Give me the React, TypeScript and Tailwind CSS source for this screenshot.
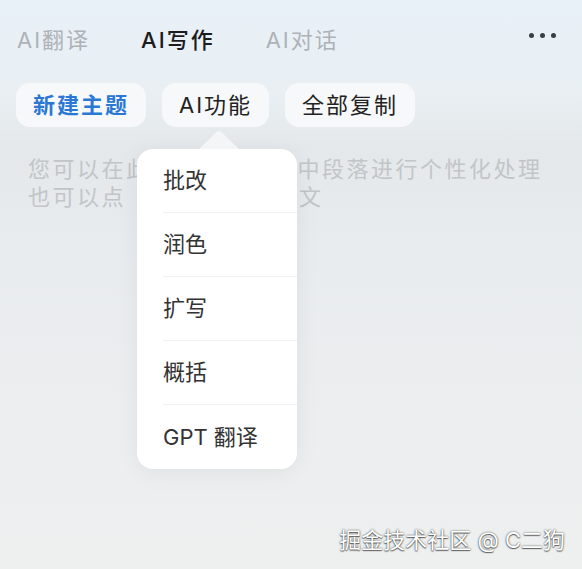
import { FC } from 'react'

const font = "font-['Inter','Noto_Sans_CJK_SC',sans-serif]"

const tabs = [
	{ label: 'AI翻译', active: false },
	{ label: 'AI写作', active: true },
	{ label: 'AI对话', active: false },
]

const actions = [
	{ label: '新建主题', className: 'text-[#2a78d4] font-bold' },
	{ label: 'AI功能', className: 'text-[#222]' },
	{ label: '全部复制', className: 'text-[#222]' },
]

const menuItems = ['批改', '润色', '扩写', '概括', 'GPT 翻译']

const Dots: FC = () => (
	<div className="mt-[7px] flex items-center gap-[6px] self-start">
		{[0, 1, 2].map(i => (
			<span key={i} className="h-[5px] w-[5px] rounded-full bg-[#3a3d41]" />
		))}
	</div>
)

const Menu: FC = () => (
	<div className="absolute left-[137px] top-[131px] w-[160px]">
		<svg width="40" height="18" viewBox="0 0 40 18" className="ml-[62px] block">
			<path d="M0 18 L17 1.5 Q20 -1 23 1.5 L40 18 Z" fill="#f4f5f6" />
		</svg>
		<div className="rounded-[16px] bg-white shadow-[0_4px_24px_rgba(0,0,0,0.06)]">
			{menuItems.map((item, index) => (
				<div key={item} className="pl-[26px]">
					<div
						className={`flex h-[64px] items-center text-[22px] text-[#333] ${
							index < menuItems.length - 1 ? 'border-b border-[#f0f1f2]' : ''
						}`}
					>
						{item}
					</div>
				</div>
			))}
		</div>
	</div>
)

export default function App() {
	return (
		<div
			className={`relative h-[569px] w-[582px] overflow-hidden bg-[linear-gradient(180deg,#e8f1f8_0%,#e9eff3_16%,#e4e8ea_26%,#e9ecee_45%,#eef0f0_100%)] ${font}`}
		>
			<div className="flex items-start justify-between pl-[17px] pr-[26px] pt-[26px]">
				<div className="flex gap-[51px]">
					{tabs.map(tab => (
						<span
							key={tab.label}
							className={`text-[22px] leading-[28px] tracking-[2px] ${
								tab.active ? 'font-medium text-[#1c1c1c]' : 'text-[#aeb2b6]'
							}`}
						>
							{tab.label}
						</span>
					))}
				</div>
				<Dots />
			</div>

			<div className="mt-[29px] flex gap-[16px] pl-[16px]">
				{actions.map(action => (
					<button
						key={action.label}
						className={`flex h-[44px] items-center rounded-[14px] bg-[#f7f8f9] px-[17px] text-[22px] tracking-[2px] ${action.className}`}
					>
						{action.label}
					</button>
				))}
			</div>

			<div className="mt-[28px] pl-[28px] text-[22px] leading-[28px] tracking-[2.5px] text-[#c2c5c8]">
				<p>您可以在此输入文字，选中段落进行个性化处理</p>
				<p>也可以点　AI功能处理全文</p>
			</div>

			<Menu />

			<div className="absolute bottom-[15px] right-[17px] text-[22px] leading-[28px] text-white [text-shadow:0_0_2px_rgba(0,0,0,0.75),0_1px_1px_rgba(0,0,0,0.5)]">
				掘金技术社区 @ C二狗
			</div>
		</div>
	)
}
